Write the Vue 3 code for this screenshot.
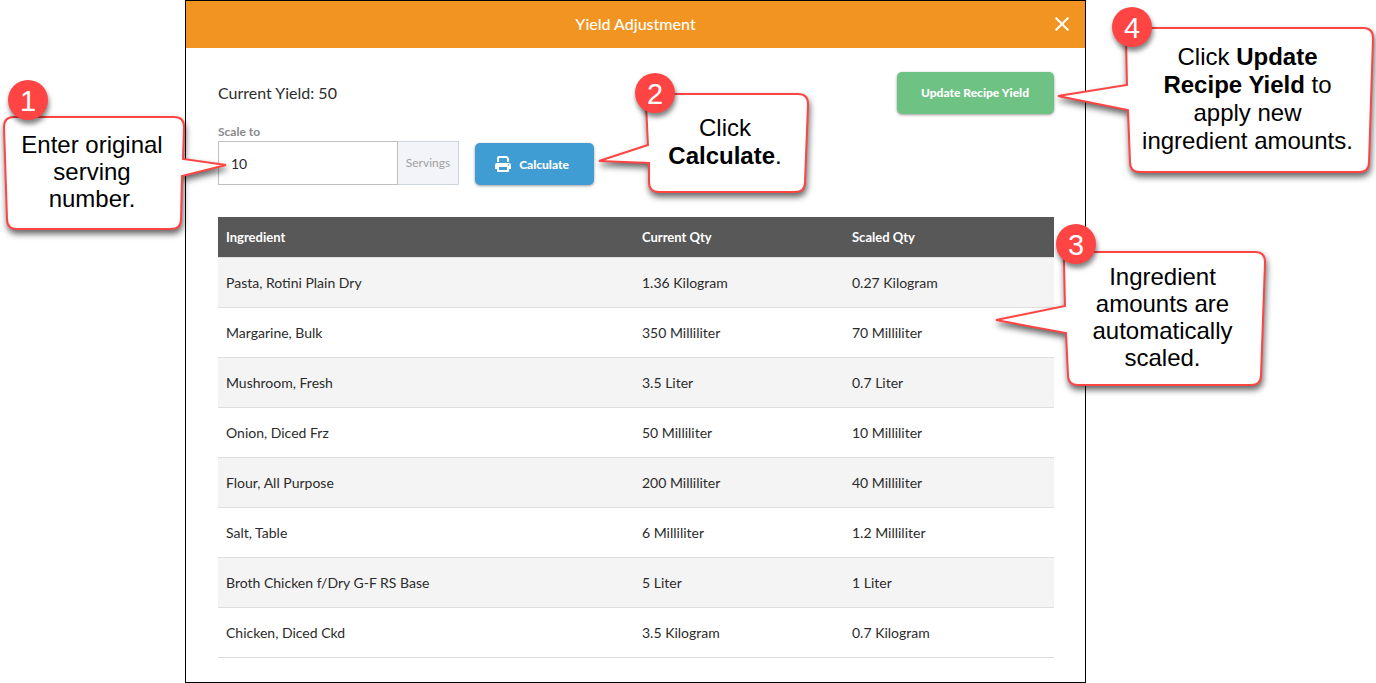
<script setup>
import { ref } from 'vue'

const servings = ref('10')

const rows = [
  { name: 'Pasta, Rotini Plain Dry', current: '1.36 Kilogram', scaled: '0.27 Kilogram' },
  { name: 'Margarine, Bulk', current: '350 Milliliter', scaled: '70 Milliliter' },
  { name: 'Mushroom, Fresh', current: '3.5 Liter', scaled: '0.7 Liter' },
  { name: 'Onion, Diced Frz', current: '50 Milliliter', scaled: '10 Milliliter' },
  { name: 'Flour, All Purpose', current: '200 Milliliter', scaled: '40 Milliliter' },
  { name: 'Salt, Table', current: '6 Milliliter', scaled: '1.2 Milliliter' },
  { name: 'Broth Chicken f/Dry G-F RS Base', current: '5 Liter', scaled: '1 Liter' },
  { name: 'Chicken, Diced Ckd', current: '3.5 Kilogram', scaled: '0.7 Kilogram' },
]
</script>

<template>
  <div class="page">
    <main class="dialog" role="dialog" aria-labelledby="dialog-title">
      <header class="dialog-head">
        <h1 id="dialog-title">Yield Adjustment</h1>
        <button class="close" type="button" aria-label="Close">
          <svg width="14" height="14" viewBox="0 0 14 14" aria-hidden="true">
            <path d="M.6 .6L13.4 13.4M13.4 .6L.6 13.4" fill="none" stroke="#fff" stroke-width="2" />
          </svg>
        </button>
      </header>

      <div class="dialog-body">
        <div class="top-row">
          <p class="current">Current Yield: 50</p>
          <button class="btn btn-green" type="button">Update Recipe Yield</button>
        </div>

        <div class="scale-row">
          <div class="field">
            <label for="scale">Scale to</label>
            <div class="group">
              <input id="scale" v-model="servings" type="text" />
              <span class="unit">Servings</span>
            </div>
          </div>
          <button class="btn btn-blue" type="button">
            <svg width="16" height="16" viewBox="0 0 16 16" aria-hidden="true">
              <path d="M3 6V2Q3 1 4 1H11.5L13 2.5V6" fill="none" stroke="#fff" stroke-width="2" />
              <path d="M2 7H14Q16 7 16 9V13H13V11H3V13H0V9Q0 7 2 7Z" fill="#fff" />
              <path d="M3 10.5V15H13V10.5" fill="none" stroke="#fff" stroke-width="2" stroke-linejoin="round" />
              <circle cx="13.4" cy="9" r=".8" fill="#409dd4" />
            </svg>
            <span>Calculate</span>
          </button>
        </div>

        <table>
          <thead>
            <tr>
              <th scope="col">Ingredient</th>
              <th scope="col" class="qty">Current Qty</th>
              <th scope="col" class="qty">Scaled Qty</th>
            </tr>
          </thead>
          <tbody>
            <tr v-for="row in rows" :key="row.name">
              <td>{{ row.name }}</td>
              <td>{{ row.current }}</td>
              <td>{{ row.scaled }}</td>
            </tr>
          </tbody>
        </table>
      </div>
    </main>

    <aside class="callout one">
      <svg class="bubble" width="180" height="112" aria-hidden="true">
        <path d="M10 0H170Q180 0 180 10L179 42L222 48L178 59L177 102Q177 112 167 112H13Q3 112 3 102L0 10Q0 0 10 0Z" />
      </svg>
      <span class="badge">1</span>
      <p>Enter original<br />serving<br />number.</p>
    </aside>

    <aside class="callout two">
      <svg class="bubble" width="162" height="98" aria-hidden="true">
        <path d="M10 0H152Q162 0 162 10L159 88Q159 98 149 98H13Q3 98 3 88L3 69L-47 67L2 51L0 10Q0 0 10 0Z" />
      </svg>
      <span class="badge">2</span>
      <p>Click<br /><b>Calculate</b>.</p>
    </aside>

    <aside class="callout three">
      <svg class="bubble" width="201" height="133" aria-hidden="true">
        <path d="M10 0H191Q201 0 201 10L197 123Q197 133 187 133H14Q4 133 4 123L2 81L-68 68L1 54L0 10Q0 0 10 0Z" />
      </svg>
      <span class="badge">3</span>
      <p>Ingredient<br />amounts are<br />automatically<br />scaled.</p>
    </aside>

    <aside class="callout four">
      <svg class="bubble" width="247" height="144" aria-hidden="true">
        <path d="M10 0H237Q247 0 247 10L243 134Q243 144 233 144H14Q4 144 4 134L2 82L-68 68L1 57L0 10Q0 0 10 0Z" />
      </svg>
      <span class="badge">4</span>
      <p>Click <b>Update</b><br /><b>Recipe Yield</b> to<br />apply new<br />ingredient amounts.</p>
    </aside>
  </div>
</template>

<style>
body {
  background: #fff;
}
</style>

<style scoped>
.page {
  position: relative;
  padding: 0 290px 0 185px;
  font-family: Lato, sans-serif;
  font-size: 14px;
  color: #2b2b2b;
}
.dialog {
  border: 1px solid #000;
  background: #fff;
}
.dialog-head {
  display: grid;
  grid-template-columns: 46px 1fr 46px;
  align-items: center;
  height: 47px;
  background: #f29421;
  color: #fff;
}
h1 {
  grid-column: 2;
  margin: 0;
  padding-bottom: 2px;
  font-size: 16px;
  font-weight: 500;
  text-align: center;
}
button {
  font-family: inherit;
  border: 0;
}
.close {
  display: flex;
  align-items: center;
  justify-content: center;
  height: 40px;
  padding: 0 0 1px;
  background: none;
}
.dialog-body {
  padding: 24px 31px 24px 32px;
}
.top-row {
  display: flex;
  align-items: center;
  justify-content: space-between;
}
.current {
  margin: 0;
  padding-bottom: 2px;
  font-size: 16px;
}
.btn {
  display: flex;
  align-items: center;
  justify-content: center;
  gap: 8px;
  height: 42px;
  border-radius: 5px;
  color: #fff;
  font-size: 12px;
  font-weight: 900;
  box-shadow: 0 1px 3px rgba(0, 0, 0, 0.4);
}
.btn-green {
  width: 157px;
  padding: 0 6px 2px 5px;
  background: #6ec284;
}
.btn-blue {
  width: 119px;
  padding: 0 10px 0 5px;
  background: #409dd4;
}
.scale-row {
  display: flex;
  align-items: flex-end;
  gap: 16px;
  margin: 10px 0 32px;
}
.field label {
  display: block;
  margin-bottom: 1px;
  font-size: 12px;
  line-height: 16px;
  font-weight: 700;
  color: #8a8a8a;
}
.group {
  display: flex;
  height: 44px;
}
.group input {
  box-sizing: border-box;
  width: 180px;
  padding: 0 12px;
  border: 1px solid #bfbfbf;
  border-radius: 0;
  background: #fff;
  font: 14px Lato, sans-serif;
  color: #2b2b2b;
}
.unit {
  display: flex;
  align-items: center;
  justify-content: center;
  box-sizing: border-box;
  width: 61px;
  padding-bottom: 2px;
  border: 1px solid #cfd5e0;
  border-left: 0;
  background: #f3f4f9;
  font-size: 12px;
  color: #a0a0a0;
}
table {
  width: 100%;
  border-collapse: separate;
  border-spacing: 0;
  table-layout: fixed;
}
th,
td {
  padding: 0 8px;
  border-bottom: 1px solid #dedede;
  text-align: left;
}
th {
  height: 40px;
  background: #585858;
  background-clip: padding-box;
  color: #fff;
  font-size: 13px;
  font-weight: 700;
}
.qty {
  width: 194px;
}
td {
  height: 49px;
}
tbody tr:nth-child(odd) {
  background: #f4f4f4;
}
.callout {
  position: absolute;
  display: flex;
  align-items: center;
  justify-content: center;
  font-family: "Liberation Sans", Arial, sans-serif;
  font-size: 24px;
  line-height: 27px;
  text-align: center;
  color: #000;
}
.bubble {
  display: block;
  overflow: visible;
  filter: drop-shadow(1px 4px 3px rgba(0, 0, 0, 0.6));
}
.bubble path {
  fill: #fff;
  stroke: #ff4444;
  stroke-width: 2;
  stroke-linejoin: miter;
}
.callout p {
  position: absolute;
  margin: 0;
  padding: 0 4px 3px 0;
  white-space: nowrap;
}
.badge {
  position: absolute;
  width: 40px;
  height: 40px;
  border-radius: 50%;
  background: #ff4444;
  color: #fff;
  font-size: 29px;
  line-height: 42px;
  box-shadow: 1px 4px 5px rgba(0, 0, 0, 0.5);
}
.one {
  left: 4px;
  top: 117px;
}
.one .badge {
  left: 4px;
  top: -37px;
}
.two {
  left: 646px;
  top: 94px;
  line-height: 28px;
}
.two .badge {
  left: -11px;
  top: -21px;
}
.three {
  right: 111px;
  top: 252px;
}
.three .badge {
  left: -8px;
  top: -28px;
}
.four {
  right: 3px;
  top: 28px;
  line-height: 28px;
}
.four .badge {
  left: -14px;
  top: -21px;
}
</style>
